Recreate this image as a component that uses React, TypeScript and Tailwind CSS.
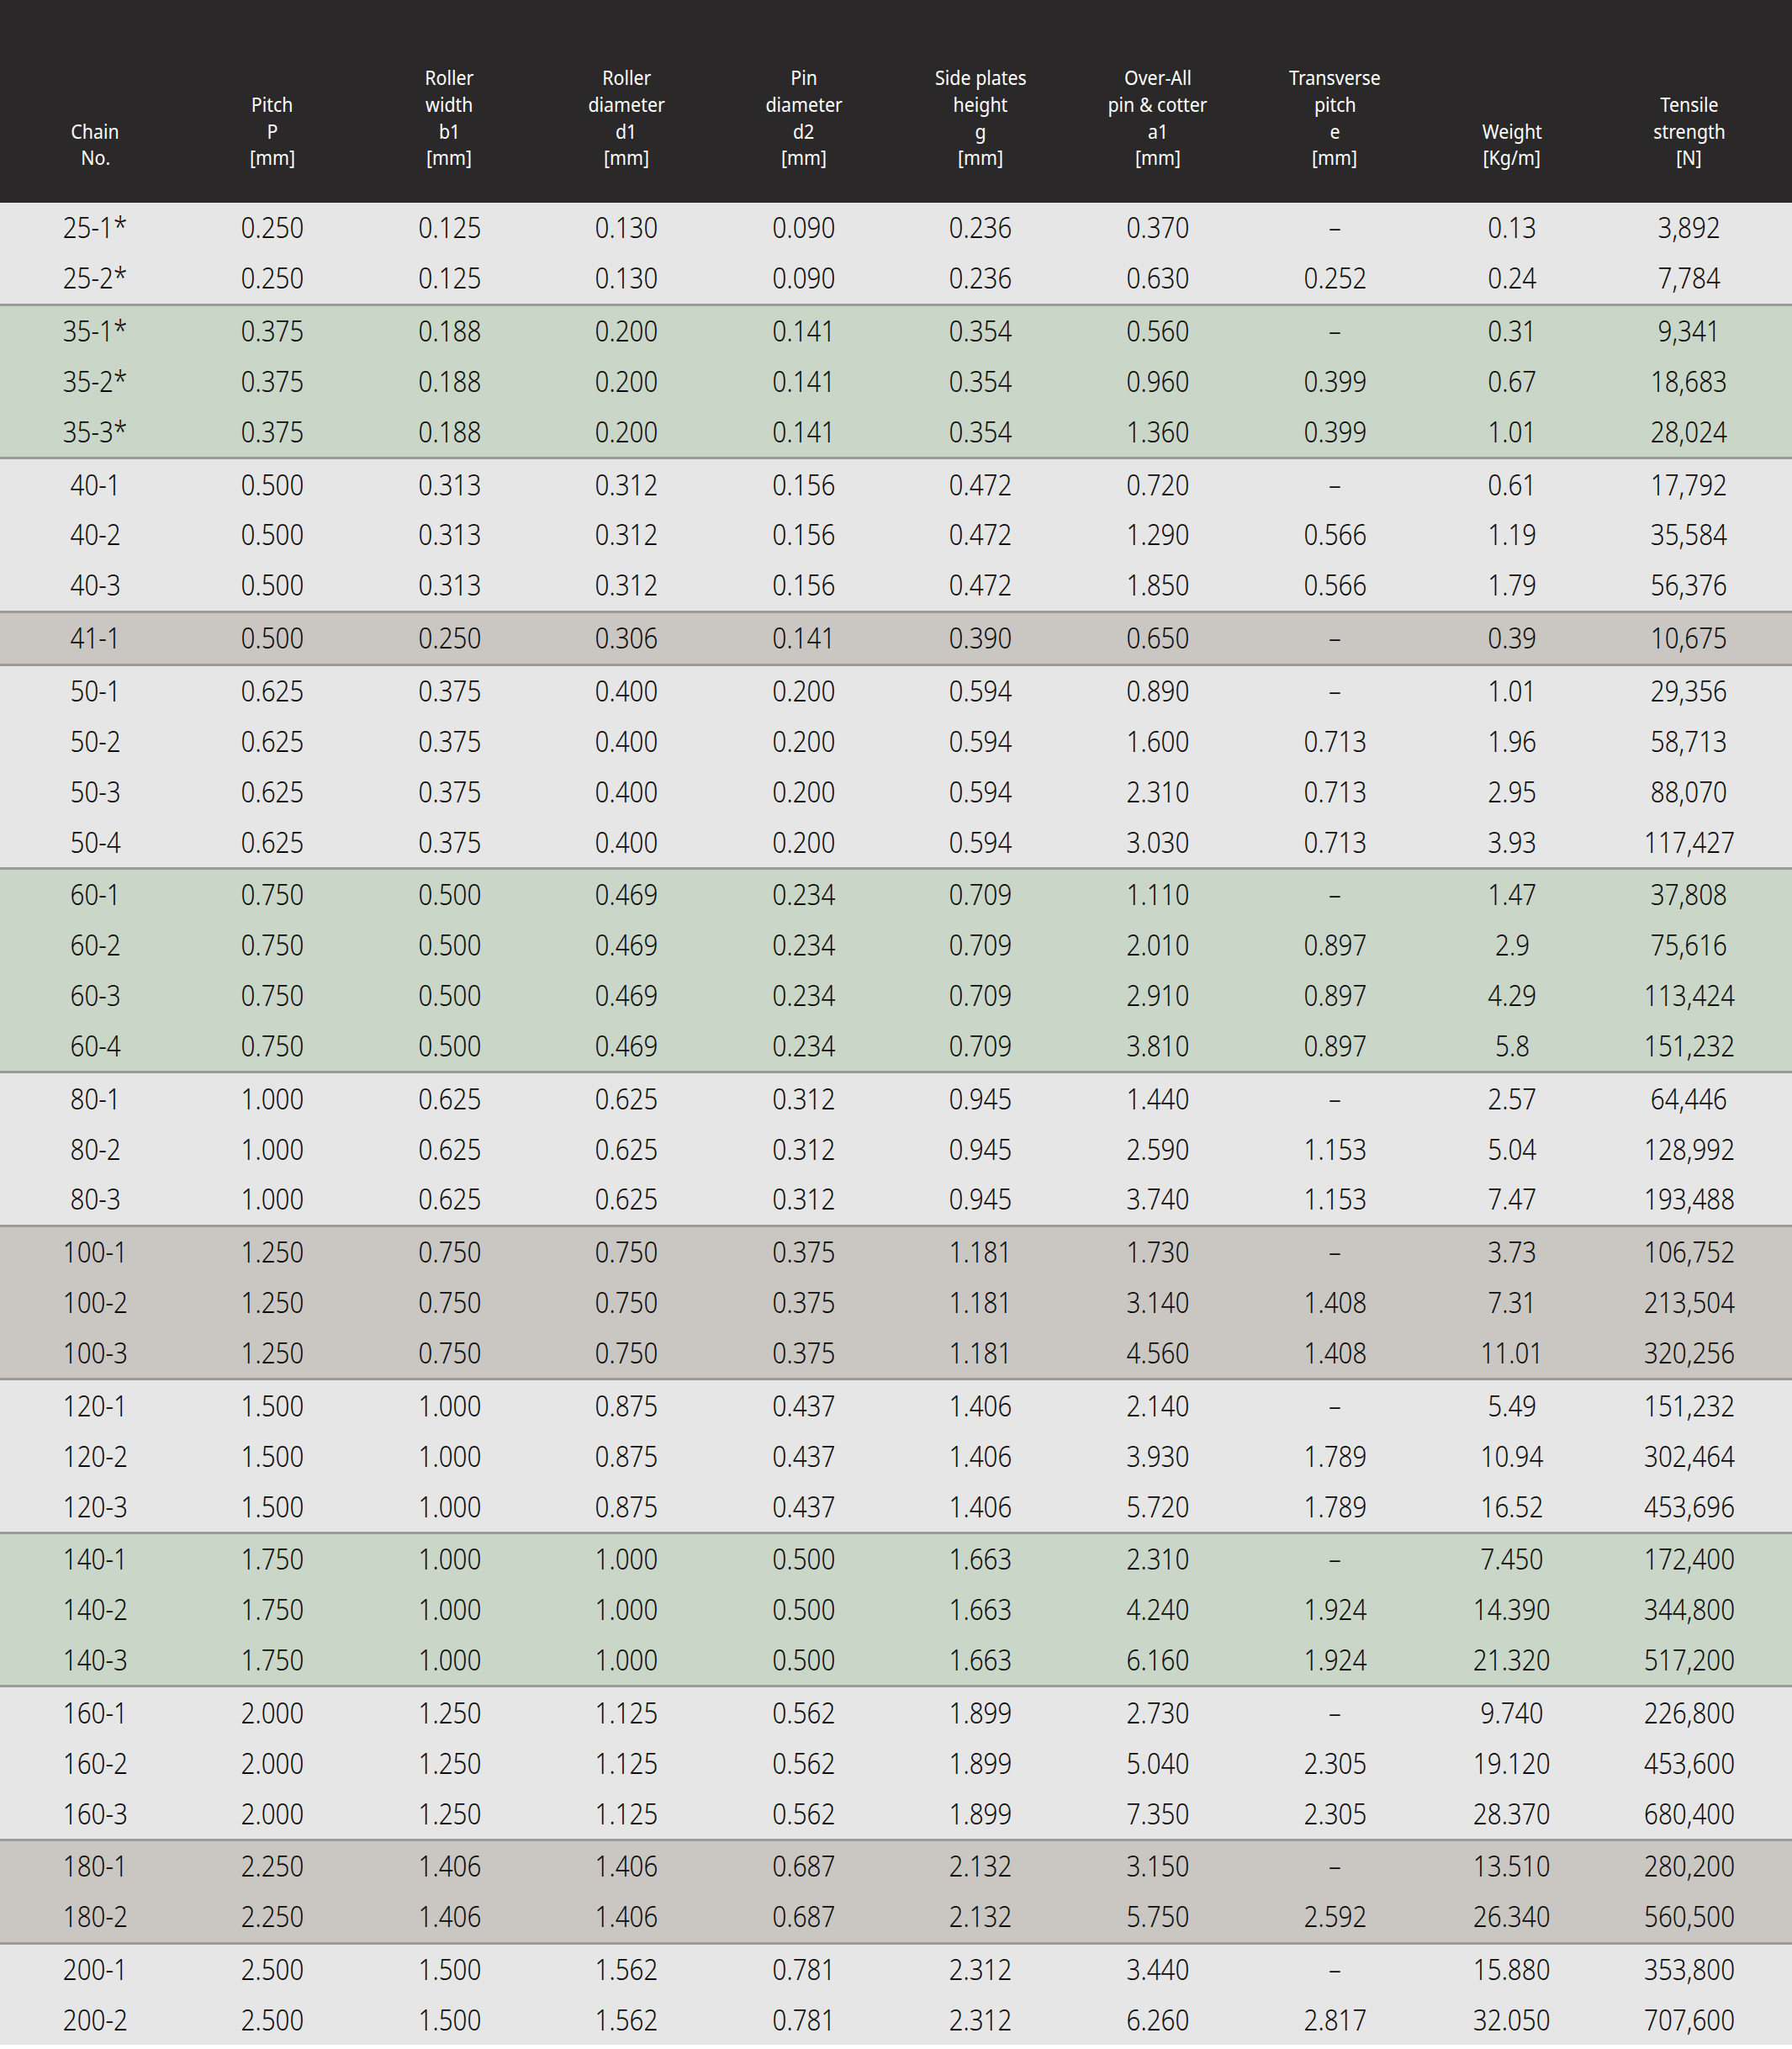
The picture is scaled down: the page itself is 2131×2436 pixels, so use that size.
import React from 'react'

type Group = { bg: string; rows: string[][] }

const headers: string[][] = [
  ['Chain', 'No.'],
  ['Pitch', 'P', '[mm]'],
  ['Roller', 'width', 'b1', '[mm]'],
  ['Roller', 'diameter', 'd1', '[mm]'],
  ['Pin', 'diameter', 'd2', '[mm]'],
  ['Side plates', 'height', 'g', '[mm]'],
  ['Over-All', 'pin & cotter', 'a1', '[mm]'],
  ['Transverse', 'pitch', 'e', '[mm]'],
  ['Weight', '[Kg/m]'],
  ['Tensile', 'strength', '[N]'],
]

const light = 'bg-[#e6e6e6]'
const green = 'bg-[#cad6c7]'
const stone = 'bg-[#cac7c3]'

const groups: Group[] = [
  {
    bg: light,
    rows: [
      ['25-1*', '0.250', '0.125', '0.130', '0.090', '0.236', '0.370', '–', '0.13', '3,892'],
      ['25-2*', '0.250', '0.125', '0.130', '0.090', '0.236', '0.630', '0.252', '0.24', '7,784'],
    ],
  },
  {
    bg: green,
    rows: [
      ['35-1*', '0.375', '0.188', '0.200', '0.141', '0.354', '0.560', '–', '0.31', '9,341'],
      ['35-2*', '0.375', '0.188', '0.200', '0.141', '0.354', '0.960', '0.399', '0.67', '18,683'],
      ['35-3*', '0.375', '0.188', '0.200', '0.141', '0.354', '1.360', '0.399', '1.01', '28,024'],
    ],
  },
  {
    bg: light,
    rows: [
      ['40-1', '0.500', '0.313', '0.312', '0.156', '0.472', '0.720', '–', '0.61', '17,792'],
      ['40-2', '0.500', '0.313', '0.312', '0.156', '0.472', '1.290', '0.566', '1.19', '35,584'],
      ['40-3', '0.500', '0.313', '0.312', '0.156', '0.472', '1.850', '0.566', '1.79', '56,376'],
    ],
  },
  {
    bg: stone,
    rows: [['41-1', '0.500', '0.250', '0.306', '0.141', '0.390', '0.650', '–', '0.39', '10,675']],
  },
  {
    bg: light,
    rows: [
      ['50-1', '0.625', '0.375', '0.400', '0.200', '0.594', '0.890', '–', '1.01', '29,356'],
      ['50-2', '0.625', '0.375', '0.400', '0.200', '0.594', '1.600', '0.713', '1.96', '58,713'],
      ['50-3', '0.625', '0.375', '0.400', '0.200', '0.594', '2.310', '0.713', '2.95', '88,070'],
      ['50-4', '0.625', '0.375', '0.400', '0.200', '0.594', '3.030', '0.713', '3.93', '117,427'],
    ],
  },
  {
    bg: green,
    rows: [
      ['60-1', '0.750', '0.500', '0.469', '0.234', '0.709', '1.110', '–', '1.47', '37,808'],
      ['60-2', '0.750', '0.500', '0.469', '0.234', '0.709', '2.010', '0.897', '2.9', '75,616'],
      ['60-3', '0.750', '0.500', '0.469', '0.234', '0.709', '2.910', '0.897', '4.29', '113,424'],
      ['60-4', '0.750', '0.500', '0.469', '0.234', '0.709', '3.810', '0.897', '5.8', '151,232'],
    ],
  },
  {
    bg: light,
    rows: [
      ['80-1', '1.000', '0.625', '0.625', '0.312', '0.945', '1.440', '–', '2.57', '64,446'],
      ['80-2', '1.000', '0.625', '0.625', '0.312', '0.945', '2.590', '1.153', '5.04', '128,992'],
      ['80-3', '1.000', '0.625', '0.625', '0.312', '0.945', '3.740', '1.153', '7.47', '193,488'],
    ],
  },
  {
    bg: stone,
    rows: [
      ['100-1', '1.250', '0.750', '0.750', '0.375', '1.181', '1.730', '–', '3.73', '106,752'],
      ['100-2', '1.250', '0.750', '0.750', '0.375', '1.181', '3.140', '1.408', '7.31', '213,504'],
      ['100-3', '1.250', '0.750', '0.750', '0.375', '1.181', '4.560', '1.408', '11.01', '320,256'],
    ],
  },
  {
    bg: light,
    rows: [
      ['120-1', '1.500', '1.000', '0.875', '0.437', '1.406', '2.140', '–', '5.49', '151,232'],
      ['120-2', '1.500', '1.000', '0.875', '0.437', '1.406', '3.930', '1.789', '10.94', '302,464'],
      ['120-3', '1.500', '1.000', '0.875', '0.437', '1.406', '5.720', '1.789', '16.52', '453,696'],
    ],
  },
  {
    bg: green,
    rows: [
      ['140-1', '1.750', '1.000', '1.000', '0.500', '1.663', '2.310', '–', '7.450', '172,400'],
      ['140-2', '1.750', '1.000', '1.000', '0.500', '1.663', '4.240', '1.924', '14.390', '344,800'],
      ['140-3', '1.750', '1.000', '1.000', '0.500', '1.663', '6.160', '1.924', '21.320', '517,200'],
    ],
  },
  {
    bg: light,
    rows: [
      ['160-1', '2.000', '1.250', '1.125', '0.562', '1.899', '2.730', '–', '9.740', '226,800'],
      ['160-2', '2.000', '1.250', '1.125', '0.562', '1.899', '5.040', '2.305', '19.120', '453,600'],
      ['160-3', '2.000', '1.250', '1.125', '0.562', '1.899', '7.350', '2.305', '28.370', '680,400'],
    ],
  },
  {
    bg: stone,
    rows: [
      ['180-1', '2.250', '1.406', '1.406', '0.687', '2.132', '3.150', '–', '13.510', '280,200'],
      ['180-2', '2.250', '1.406', '1.406', '0.687', '2.132', '5.750', '2.592', '26.340', '560,500'],
    ],
  },
  {
    bg: light,
    rows: [
      ['200-1', '2.500', '1.500', '1.562', '0.781', '2.312', '3.440', '–', '15.880', '353,800'],
      ['200-2', '2.500', '1.500', '1.562', '0.781', '2.312', '6.260', '2.817', '32.050', '707,600'],
    ],
  },
]

const App = () => {
  return (
    <div className="w-[2131px] bg-white font-['Noto_Sans',sans-serif]">
      {/* header */}
      <div className="grid grid-cols-10 h-[241px] pl-[8px] pr-[17px] bg-[#2a2829] text-white">
        {headers.map((lines, i) => (
          <div key={i} className="flex flex-col items-center justify-end pb-[37px] text-[23px] leading-[31.7px]">
            {lines.map((l, j) => (
              <span key={j} className="block scale-x-[0.93] whitespace-nowrap">
                {l}
              </span>
            ))}
          </div>
        ))}
      </div>

      {/* body */}
      {groups.map((g, gi) => (
        <div key={gi} className={`${g.bg} ${gi > 0 ? 'border-t-[3px] border-[#9b9b9b]' : ''}`}>
          {g.rows.map((r, ri) => (
            <div key={ri} className="grid grid-cols-10 h-[59.85px] pl-[8px] pr-[17px] text-[#0d0d0d]">
              {r.map((c, ci) => (
                <div key={ci} className="flex items-center justify-center text-[34px] font-[350]">
                  <span className="block scale-x-[0.87] whitespace-nowrap">{c}</span>
                </div>
              ))}
            </div>
          ))}
        </div>
      ))}
    </div>
  )
}

export default App
